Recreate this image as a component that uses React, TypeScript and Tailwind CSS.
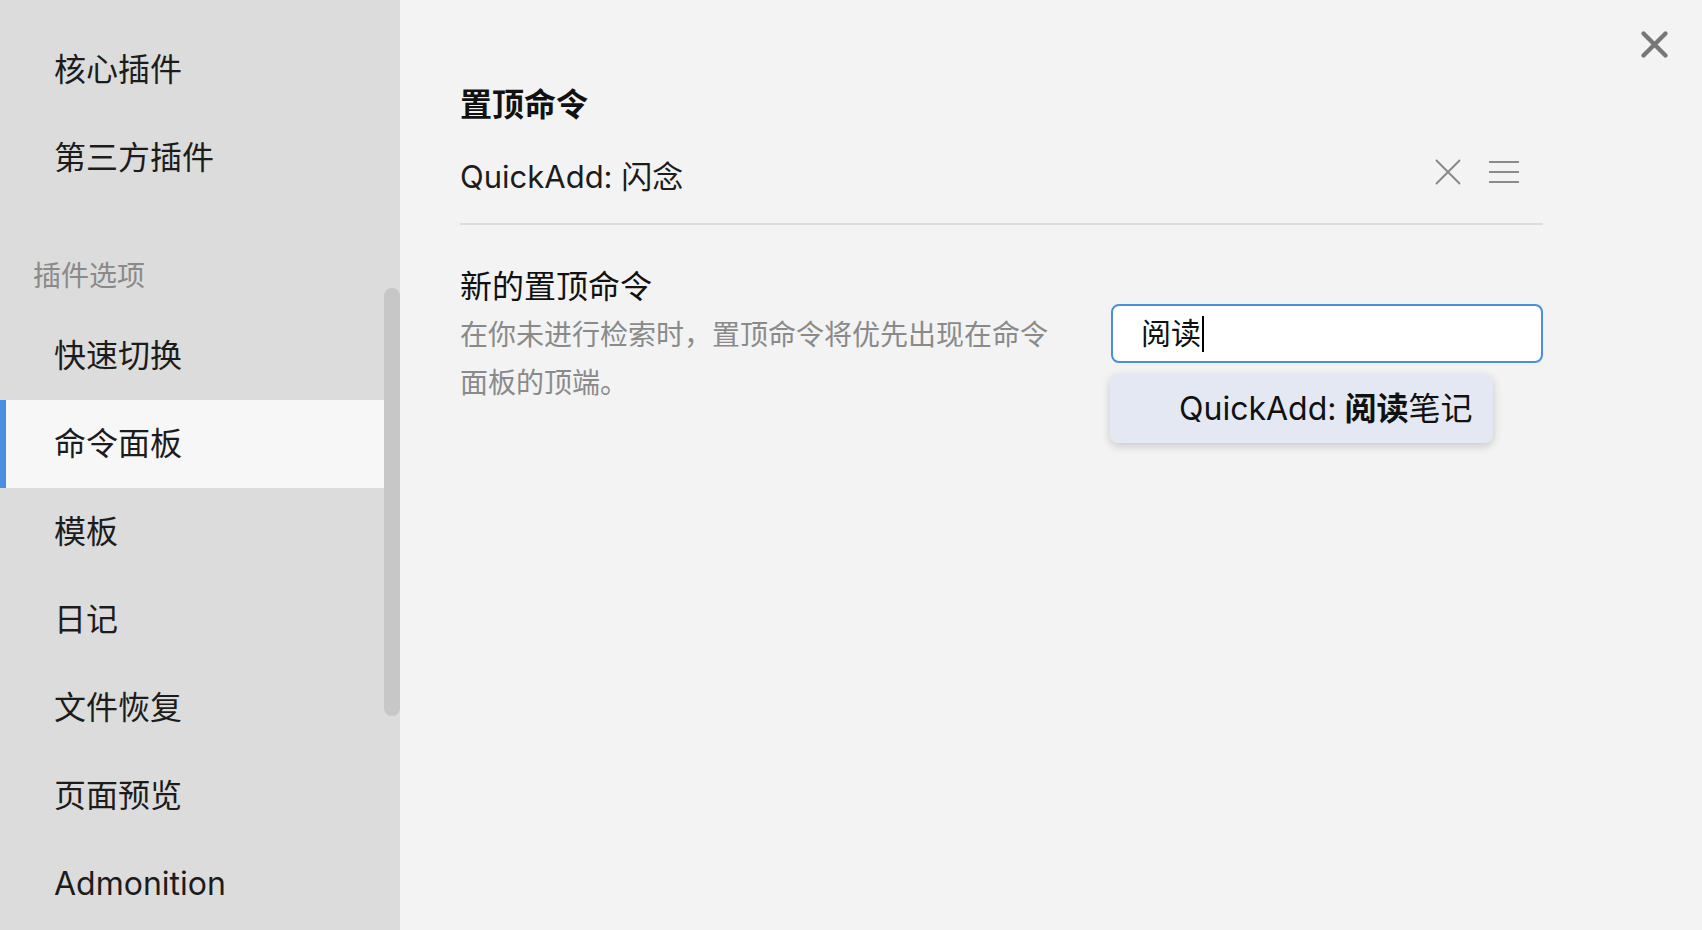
import React from "react";

const font = {
  fontFamily: 'Inter, "Noto Sans CJK SC", "Noto Sans", sans-serif',
};

const topItems = ["核心插件", "第三方插件"];
const pluginItems = [
  "快速切换",
  "命令面板",
  "模板",
  "日记",
  "文件恢复",
  "页面预览",
  "Admonition",
];

function SideItem({ label, active }: { label: string; active?: boolean }) {
  return (
    <div
      className={
        "flex h-[88px] items-center text-[32px] text-[#1c1c1c] " +
        (active ? "border-l-[6px] border-[#4a8ee0] bg-[#f7f7f7] pl-[48px]" : "pl-[54px]")
      }
    >
      {label}
    </div>
  );
}

export default function App() {
  return (
    <div className="flex h-[930px] w-[1702px] overflow-hidden" style={font}>
      {/* Sidebar */}
      <div className="flex h-full w-[400px] shrink-0 bg-[#dcdcdc]">
        <div className="w-[384px] pt-[26px]">
          {topItems.map((t) => (
            <SideItem key={t} label={t} />
          ))}
          <div className="pl-[33px] pt-[60px] pb-[22px] text-[28px] leading-[28px] text-[#8a8a8a]">
            插件选项
          </div>
          {pluginItems.map((t) => (
            <SideItem key={t} label={t} active={t === "命令面板"} />
          ))}
        </div>
        <div className="w-[16px]">
          <div className="mt-[288px] h-[428px] rounded-t-[8px] rounded-b-[8px] bg-[#c6c7c6]" />
        </div>
      </div>

      {/* Main */}
      <div className="relative flex-1 bg-[#f3f3f3] pl-[60px] pr-[159px] pt-[85px]">
        <button className="absolute right-[33px] top-[30px] text-[#777]">
          <svg width="29" height="29" viewBox="0 0 29 29" fill="none" stroke="currentColor" strokeWidth="4.4" strokeLinecap="round">
            <path d="M3.5 3.5 L25.5 25.5 M25.5 3.5 L3.5 25.5" />
          </svg>
        </button>

        <div className="text-[32px] font-bold leading-[40px] text-[#111]">置顶命令</div>

        <div className="flex items-center justify-between border-b-2 border-[#dcdcdc] pb-[26px] pt-[32px]">
          <div className="text-[31px] leading-[40px] text-[#1c1c1c]">QuickAdd: 闪念</div>
          <div className="mb-[10px] flex items-center gap-[28px] pr-[24px] text-[#8a8a8a]">
            <svg width="26" height="26" viewBox="0 0 26 26" fill="none" stroke="currentColor" strokeWidth="2">
              <path d="M1 1 L25 25 M25 1 L1 25" />
            </svg>
            <svg width="30" height="24" viewBox="0 0 30 24" fill="none" stroke="currentColor" strokeWidth="2">
              <path d="M0 2 H30 M0 12 H30 M0 22 H30" />
            </svg>
          </div>
        </div>

        <div className="flex items-start justify-between pt-[44px]">
          <div className="w-[600px]">
            <div className="text-[32px] leading-[36px] text-[#111]">新的置顶命令</div>
            <div className="mt-[6px] text-[28px] leading-[48px] text-[#8a8a8a]">
              在你未进行检索时，置顶命令将优先出现在命令面板的顶端。
            </div>
          </div>
          <div className="relative mt-[35px]">
            <div className="flex h-[59px] w-[432px] items-center rounded-[8px] border-2 border-[#4a8ee0] bg-white pl-[28px] text-[30px] text-[#111]">
              <span>阅读</span>
              <span className="ml-[1px] h-[36px] w-[2px] bg-black" />
            </div>
            <div className="absolute left-[-1px] top-[70px] flex h-[69px] w-[383px] items-center rounded-[8px] bg-[#e3e8f2] pl-[69px] text-[32px] text-[#111] shadow-[0_3px_10px_rgba(0,0,0,0.18)]">
              QuickAdd: <span className="ml-[8px] font-bold">阅读</span>笔记
            </div>
          </div>
        </div>
      </div>
    </div>
  );
}
